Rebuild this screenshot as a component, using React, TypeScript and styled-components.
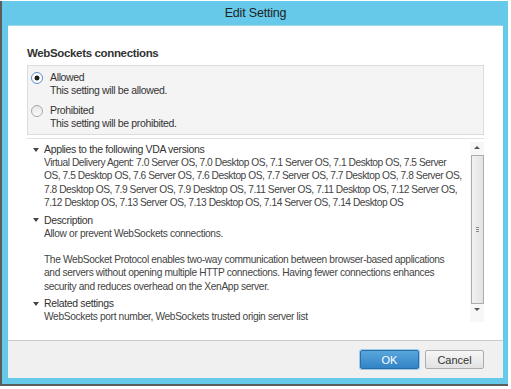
import React from "react";
import styled, { createGlobalStyle, css } from "styled-components";

const GlobalStyle = createGlobalStyle`
  html, body {
    margin: 0;
    padding: 0;
    background: #ffffff;
  }
  body {
    font-family: "Liberation Sans", Arial, sans-serif;
    color: #333333;
  }
`;

// the dialog font is narrower than Arial, so tighten the spacing a bit
const smallText = css`
  font-size: 10.2px;
  letter-spacing: -0.35px;
  line-height: 13px;
`;

const versionLines = [
  "Virtual Delivery Agent: 7.0 Server OS, 7.0 Desktop OS, 7.1 Server OS, 7.1 Desktop OS, 7.5 Server",
  "OS, 7.5 Desktop OS, 7.6 Server OS, 7.6 Desktop OS, 7.7 Server OS, 7.7 Desktop OS, 7.8 Server OS,",
  "7.8 Desktop OS, 7.9 Server OS, 7.9 Desktop OS, 7.11 Server OS, 7.11 Desktop OS, 7.12 Server OS,",
  "7.12 Desktop OS, 7.13 Server OS, 7.13 Desktop OS, 7.14 Server OS, 7.14 Desktop OS",
];

const Window = styled.div`
  box-sizing: border-box;
  width: 508px;
  height: 385px;
  margin-top: 1px;
  background: #66c9ea;
  border-left: 2px solid #5c5c5c;
  border-bottom: 2px solid #5c5c5c;
  padding: 0 5px 6px 6px;
  display: flex;
  flex-direction: column;
`;

const TitleBar = styled.div`
  height: 24px;
  display: flex;
  align-items: center;
  justify-content: center;
  font-size: 12.5px;
  letter-spacing: -0.2px;
  color: #222222;
`;

const Body = styled.div`
  flex: 1;
  display: flex;
  flex-direction: column;
  background: #ffffff;
  border-top: 1px solid #9fd6e8;
`;

const Content = styled.div`
  flex: 1;
  padding: 20px 19px 0 19px;
  display: flex;
  flex-direction: column;
`;

const Heading = styled.div`
  font-size: 11.5px;
  font-weight: bold;
  letter-spacing: -0.35px;
  line-height: 14px;
  color: #333333;
`;

const OptionBox = styled.div`
  box-sizing: border-box;
  margin-top: 5px;
  height: 70px;
  background: #f4f4f4;
  border: 1px solid #dcdcdc;
  padding: 5px 0 0 3px;
  display: flex;
  flex-direction: column;
  gap: 7px;
`;

const Option = styled.div`
  display: flex;
  align-items: flex-start;
  gap: 7px;
`;

const Radio = styled.span<{ $checked?: boolean }>`
  box-sizing: border-box;
  width: 12px;
  height: 12px;
  margin-top: 1px;
  border-radius: 50%;
  border: 1px solid ${(p) => (p.$checked ? "#5b8fc4" : "#a8a8a8")};
  background: ${(p) =>
    p.$checked
      ? "radial-gradient(circle, #222 0 2.2px, #fff 2.8px)"
      : "linear-gradient(#e6e6e6, #fbfbfb)"};
  flex-shrink: 0;
`;

const OptionText = styled.div`
  ${smallText}
  font-size: 10.5px;
  color: #333333;
`;

const Separator = styled.div`
  margin-top: 3px;
  height: 1px;
  background: #e2e2e2;
`;

const DetailPanel = styled.div`
  height: 183px;
  display: flex;
`;

const Details = styled.div`
  flex: 1;
  padding: 4px 0 0 6px;
  overflow: hidden;
`;

const Section = styled.div`
  margin-bottom: 4px;
`;

const SectionHeader = styled.div`
  ${smallText}
  font-size: 10.5px;
  display: flex;
  align-items: center;
  gap: 5px;
  color: #333333;
`;

const Caret = styled.span`
  width: 0;
  height: 0;
  border-left: 3px solid transparent;
  border-right: 3px solid transparent;
  border-top: 4px solid #444444;
`;

const SectionBody = styled.div`
  ${smallText}
  line-height: 13.4px;
  padding-left: 11px;
  width: 412px;
  color: #444444;
`;

const VersionLine = styled.div`
  white-space: nowrap;
  letter-spacing: -0.45px;
`;

const Blank = styled.div`
  height: 13px;
`;

const Scrollbar = styled.div`
  width: 14px;
  margin-top: 3px;
  height: 180px;
  display: flex;
  flex-direction: column;
  align-items: center;
  background: #f7f7f7;
`;

const Arrow = styled.span<{ $down?: boolean }>`
  margin-top: 4px;
  width: 0;
  height: 0;
  border-left: 3px solid transparent;
  border-right: 3px solid transparent;
  ${(p) =>
    p.$down
      ? "border-top: 3px solid #555;"
      : "border-bottom: 3px solid #555;"}
`;

const Thumb = styled.div`
  box-sizing: border-box;
  margin-top: 6px;
  width: 13px;
  height: 149px;
  border: 1px solid #acacac;
  background: linear-gradient(90deg, #f1f1f1, #e3e3e3);
  display: flex;
  align-items: center;
  justify-content: center;
`;

const Grip = styled.span`
  width: 3px;
  height: 5px;
  background: repeating-linear-gradient(#8a8a8a 0 1px, transparent 1px 2px);
`;

const Footer = styled.div`
  height: 37px;
  border-top: 1px solid #cccccc;
  background: #f0f0f0;
  display: flex;
  align-items: center;
  justify-content: flex-end;
  gap: 6px;
  padding-right: 19px;
`;

const Button = styled.button<{ $primary?: boolean }>`
  box-sizing: border-box;
  width: 59px;
  height: 19px;
  padding: 0;
  font-family: "Liberation Sans", Arial, sans-serif;
  font-size: 11px;
  border-radius: 2px;
  border: 1px solid ${(p) => (p.$primary ? "#2a6ea8" : "#acacac")};
  color: ${(p) => (p.$primary ? "#ffffff" : "#333333")};
  background: ${(p) =>
    p.$primary
      ? "linear-gradient(#5aa6dc, #3284c6)"
      : "linear-gradient(#f6f6f6, #e2e2e2)"};
  box-shadow: ${(p) => (p.$primary ? "0 0 0 1px #9fcbeb" : "none")};
`;

export default function App() {
  return (
    <>
      <GlobalStyle />
      <Window>
        <TitleBar>Edit Setting</TitleBar>
        <Body>
          <Content>
            <Heading>WebSockets connections</Heading>
            <OptionBox>
              <Option>
                <Radio $checked />
                <OptionText>
                  Allowed
                  <br />
                  This setting will be allowed.
                </OptionText>
              </Option>
              <Option>
                <Radio />
                <OptionText>
                  Prohibited
                  <br />
                  This setting will be prohibited.
                </OptionText>
              </Option>
            </OptionBox>
            <Separator />
            <DetailPanel>
              <Details>
                <Section>
                  <SectionHeader>
                    <Caret />
                    Applies to the following VDA versions
                  </SectionHeader>
                  <SectionBody>
                    {versionLines.map((line) => (
                      <VersionLine key={line}>{line}</VersionLine>
                    ))}
                  </SectionBody>
                </Section>
                <Section>
                  <SectionHeader>
                    <Caret />
                    Description
                  </SectionHeader>
                  <SectionBody>
                    Allow or prevent WebSockets connections.
                    <Blank />
                    The WebSocket Protocol enables two-way communication between
                    browser-based applications and servers without opening
                    multiple HTTP connections. Having fewer connections enhances
                    security and reduces overhead on the XenApp server.
                  </SectionBody>
                </Section>
                <Section>
                  <SectionHeader>
                    <Caret />
                    Related settings
                  </SectionHeader>
                  <SectionBody>
                    WebSockets port number, WebSockets trusted origin server list
                  </SectionBody>
                </Section>
              </Details>
              <Scrollbar>
                <Arrow />
                <Thumb>
                  <Grip />
                </Thumb>
                <Arrow $down />
              </Scrollbar>
            </DetailPanel>
          </Content>
          <Footer>
            <Button $primary>OK</Button>
            <Button>Cancel</Button>
          </Footer>
        </Body>
      </Window>
    </>
  );
}
